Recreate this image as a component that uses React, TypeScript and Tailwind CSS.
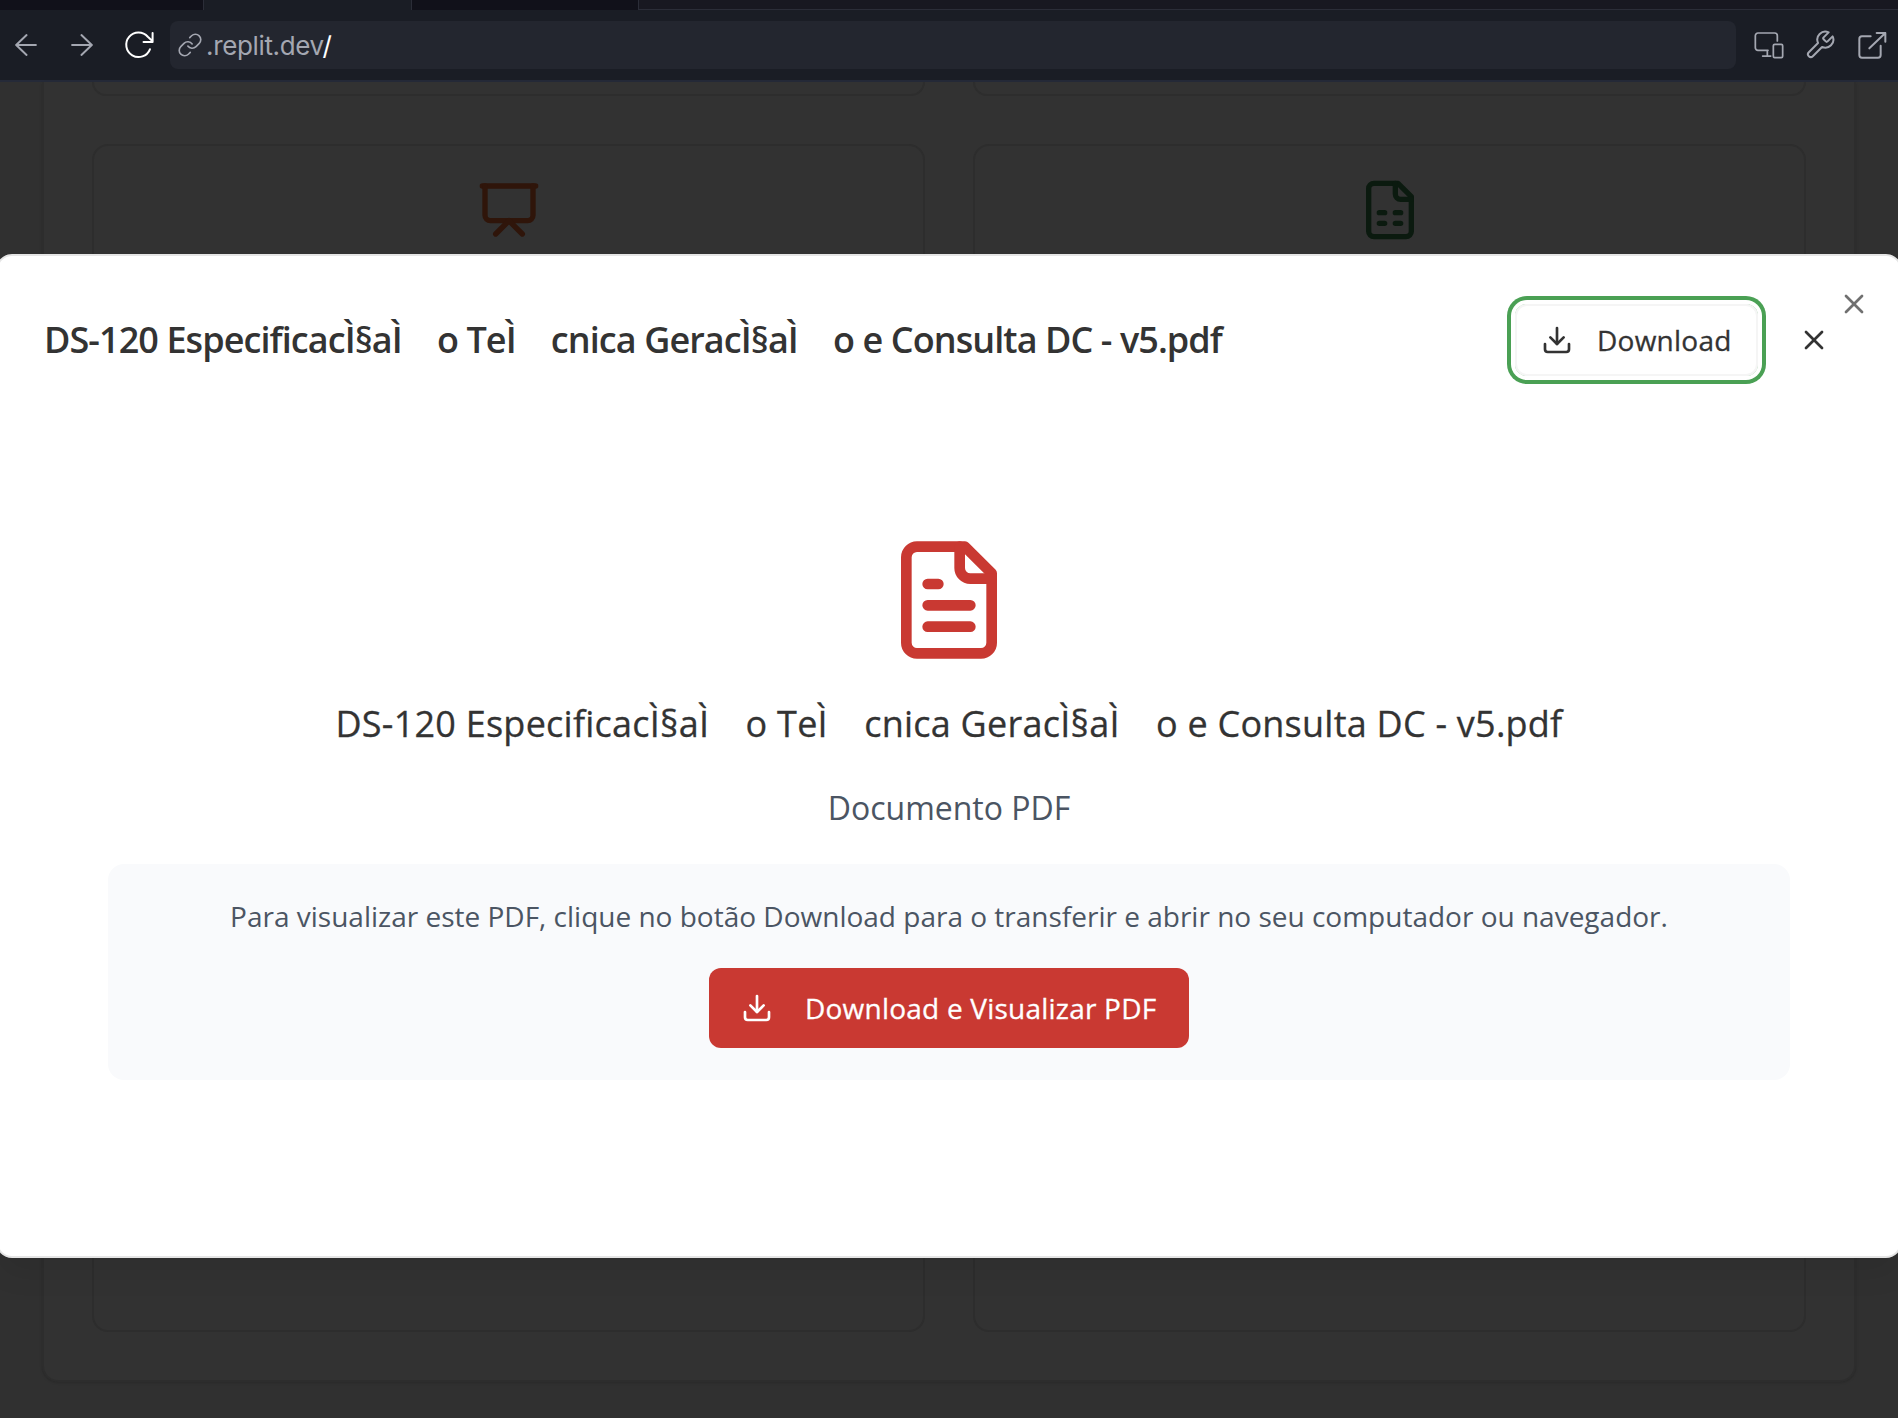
import React from "react";
import { Download, Presentation, X } from "lucide-react";

const FILE_NAME = "DS-120 EspecificacÌ§aÌ\u2003o TeÌ\u2003cnica GeracÌ§aÌ\u2003o e Consulta DC - v5.pdf";

function Svg({ size, children, className = "", stroke = 1.5 }: { size: number; children: React.ReactNode; className?: string; stroke?: number }) {
  return (
    <svg width={size} height={size} viewBox="0 0 24 24" fill="none" stroke="currentColor" strokeWidth={stroke} strokeLinecap="round" strokeLinejoin="round" className={`shrink-0 ${className}`}>
      {children}
    </svg>
  );
}

function FileIcon({ size, lines, className }: { size: number; lines: string; className: string }) {
  return (
    <Svg size={size} stroke={2} className={className}>
      <path d="M15 2H6a2 2 0 0 0-2 2v16a2 2 0 0 0 2 2h12a2 2 0 0 0 2-2V7Z" />
      <path d="M14 2v4a2 2 0 0 0 2 2h4" />
      <path d={lines} />
    </Svg>
  );
}

function Tabs() {
  return (
    <div className="flex h-[10px] shrink-0">
      <div className="w-[203px] bg-[#11111a]" />
      <div className="w-[209px] border-x border-[#2b2d38] bg-[#1a1d25]" />
      <div className="w-[227px] border-r border-[#2b2d38] bg-[#11111a]" />
      <div className="flex-1 border-b border-[#2b2d38] bg-[#181821]" />
    </div>
  );
}

function Toolbar() {
  return (
    <div className="flex h-[72px] shrink-0 items-center border-b-2 border-[#252a38] bg-[#1a1d25] text-[#a4a7b1]">
      <Svg size={28} stroke={1.7} className="ml-3"><path d="M20.5 12H3.5M12.5 3.5 3.6 12l8.9 8.5" /></Svg>
      <Svg size={28} stroke={1.7} className="ml-7"><path d="M3.5 12h17M11.5 3.5l8.9 8.5-8.9 8.5" /></Svg>
      <Svg size={32} className="ml-[27px] text-white"><path d="M20.2 15.2A9.2 9.2 0 1 1 18.6 5.8L22.2 9.2M22.2 3v6.7h-6.8" /></Svg>
      <div className="ml-[15px] flex h-12 w-[1566px] items-center rounded-lg bg-[#23262f] pl-[7px]">
        <Svg size={26}><path d="M10 13a5 5 0 0 0 7.54.54l3-3a5 5 0 0 0-7.07-7.07l-1.72 1.71" /><path d="M14 11a5 5 0 0 0-7.54-.54l-3 3a5 5 0 0 0 7.07 7.07l1.71-1.71" /></Svg>
        <span className="ml-[3px] mt-[2px] font-['Inter'] text-[26px] leading-8 tracking-[-0.35px]">.replit.dev<span className="text-white">/</span></span>
      </div>
      <Svg size={32} stroke={1.3} className="ml-[16px]"><path d="M12 16H4.500a2 2 0 0 1-2-2V5a2 2 0 0 1 2-2H17a2 2 0 0 1 2 2v4M11.500 16v4M8 20.300h6M17 11.500h5a1 1 0 0 1 1 1V20.500a1 1 0 0 1-1 1h-5a1 1 0 0 1-1-1V12.500a1 1 0 0 1 1-1z" /></Svg>
      <Svg size={32} className="ml-[20px]"><path d="M14.7 6.3a1 1 0 0 0 0 1.4l1.6 1.6a1 1 0 0 0 1.4 0l3.77-3.77a6 6 0 0 1-7.94 7.94l-6.91 6.91a2.12 2.12 0 0 1-3-3l6.91-6.91a6 6 0 0 1 7.94-7.94l-3.76 3.76z" /></Svg>
      <Svg size={32} className="ml-[20px]"><path d="M11 5.500H4.500a2 2 0 0 0-2 2V19.500a2 2 0 0 0 2 2h12a2 2 0 0 0 2-2v-7M15.500 3h6.500v6.500M22 3 10 14.500" /></Svg>
    </div>
  );
}

export default function App() {
  return (
    <div className="relative flex h-[1418px] w-[1898px] flex-col overflow-hidden bg-[#303030] font-['Open_Sans','Noto_Sans',sans-serif]">
      <Tabs />
      <Toolbar />
      <div className="mx-[42px] h-[1300px] w-[1814px] rounded-b-2xl border-2 border-t-0 border-[#2d2d2d] bg-[#323232] px-12 shadow-sm">
        <div className="grid grid-cols-2 gap-x-12">
          <div className="h-[14px] rounded-b-2xl border-2 border-t-0 border-[#2d2d2d]" />
          <div className="h-[14px] rounded-b-2xl border-2 border-t-0 border-[#2d2d2d]" />
          <div className="mt-12 flex h-[1188px] justify-center rounded-2xl border-2 border-[#2d2d2d] pt-8">
            <Presentation size={64} className="text-[#2f150a]" />
          </div>
          <div className="mt-12 flex h-[1188px] justify-center rounded-2xl border-2 border-[#2d2d2d] pt-8">
            <FileIcon size={64} lines="M8 13h2M14 13h2M8 17h2M14 17h2" className="text-[#0b1a0f]" />
          </div>
        </div>
      </div>

      <div className="absolute left-[-4px] top-[254px] h-[1004px] w-[1906px] rounded-2xl border-2 border-[#e5e5e5] bg-white text-[#333] shadow-[0_20px_30px_-6px_rgba(0,0,0,0.08)]">
        <X size={32} className="absolute right-[30px] top-8 text-[#707070]" />
        <div className="flex h-[168px] items-center pl-[46px] pr-[70px]">
          <h2 className="flex-1 whitespace-pre text-[36px] font-semibold leading-9 tracking-[-0.92px]">{FILE_NAME}</h2>
          <button className="flex h-[72px] w-[243px] shrink-0 items-center rounded-xl border-2 border-[#f5f5f5] pl-6 text-[28px] tracking-[0.24px] ring-4 ring-[#4aa054] ring-offset-4 [-webkit-text-stroke:0.3px_#333]">
            <Download size={32} className="shrink-0" />
            <span className="ml-6">Download</span>
          </button>
          <X size={32} className="ml-10 shrink-0" />
        </div>
        <div className="flex flex-col items-center px-[110px] pt-[112px]">
          <FileIcon size={128} lines="M10 9H8M16 13H8M16 17H8" className="text-[#c93932]" />
          <p className="mt-8 whitespace-pre text-[36px] leading-[56px] tracking-[0.24px] [-webkit-text-stroke:0.3px_#333]">{FILE_NAME}</p>
          <p className="mt-8 text-[32px] leading-[48px] text-[#4b5563]">Documento PDF</p>
          <div className="mt-8 flex h-[216px] w-[1682px] flex-col items-center rounded-2xl bg-[#f9fafc] pt-8">
            <p className="whitespace-nowrap text-[28px] leading-10 text-[#4b5563]">Para visualizar este PDF, clique no botão Download para o transferir e abrir no seu computador ou navegador.</p>
            <button className="mt-8 flex h-20 w-[480px] items-center rounded-xl bg-[#c93932] pl-8 text-[28px] tracking-[0.22px] text-white [-webkit-text-stroke:0.3px_#fff]">
              <Download size={32} />
              <span className="ml-8">Download e Visualizar PDF</span>
            </button>
          </div>
        </div>
      </div>
    </div>
  );
}
